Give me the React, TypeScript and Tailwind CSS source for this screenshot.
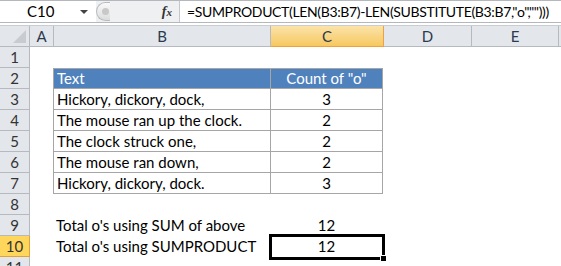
import type { FC, ReactNode } from 'react';

const font = { fontFamily: 'Lato, "Noto Sans", sans-serif' };

const tableRows: [string, number][] = [
  ['Hickory, dickory, dock,', 3],
  ['The mouse ran up the clock.', 2],
  ['The clock struck one,', 2],
  ['The mouse ran down,', 2],
  ['Hickory, dickory, dock.', 3],
];

const RowHead: FC<{ n: number; active?: boolean }> = ({ n, active }) => (
  <div
    className={
      active
        ? 'w-[30px] h-[21px] shrink-0 flex items-center justify-center border-r border-b border-[#e0a23a] bg-[#ffd65c] text-[#333] text-[15px]'
        : 'w-[30px] h-[21px] shrink-0 flex items-center justify-center border-r border-b border-[#b6babf] bg-[#e3e6ea] text-[#333] text-[15px]'
    }
  >
    {n}
  </div>
);

const Row: FC<{ n: number; active?: boolean; children?: ReactNode }> = ({ n, active, children }) => (
  <div className="flex h-[21px]">
    <RowHead n={n} active={active} />
    <div className="w-[24px] shrink-0" />
    {children}
  </div>
);

const App: FC = () => (
  <div className="w-[561px] h-[266px] overflow-hidden bg-white text-black" style={font}>
    {/* formula bar */}
    <div className="flex h-[23px] border-t border-b border-[#b4b8bd] bg-white">
      <div className="w-[96px] shrink-0 relative flex items-center text-[15px]">
        <span className="ml-[27px]">C10</span>
        <span className="absolute left-[80px] top-[9px] w-0 h-0 border-l-[4px] border-r-[4px] border-t-[4px] border-l-transparent border-r-transparent border-t-[#444]" />
      </div>
      <div className="w-[84px] shrink-0 flex items-center bg-[#eef0f2] border-r border-[#c4c8cc]">
        <div className="w-[14px] h-[19px] rounded-l-full border border-r-0 border-[#b8bcc0] bg-gradient-to-b from-[#fafafa] to-[#dcdcdc] flex items-center justify-center">
          <div className="w-[7px] h-[7px] rounded-full bg-[#c8c8c8] ml-[3px]" />
        </div>
        <span className="ml-auto mr-[7px] text-[14px] italic font-bold text-[#333]" style={{ fontFamily: '"Liberation Serif", serif' }}>
          f<span className="text-[11px]">x</span>
        </span>
      </div>
      <div className="flex-1 min-w-0 flex items-center pl-[7px] text-[14px] tracking-[-0.35px] whitespace-nowrap">
        =SUMPRODUCT(LEN(B3:B7)-LEN(SUBSTITUTE(B3:B7,"o","")))
      </div>
    </div>
    <div className="h-[3px] border-b border-[#c9ccd0]" />

    {/* column headers */}
    <div className="flex h-[21px] bg-[#e3e6ea] text-[#2b3a4e] text-[15px]">
      <div className="w-[30px] shrink-0 relative border-r border-b border-[#b6babf]">
        <span className="absolute right-[3px] bottom-[3px] w-0 h-0" style={{ borderBottom: '13px solid #c8ccd0', borderLeft: '13px solid transparent' }} />
      </div>
      <div className="w-[24px] shrink-0 flex items-center justify-center border-r border-b border-[#b6babf]">A</div>
      <div className="w-[217px] shrink-0 flex items-center justify-center border-r border-b border-[#b6babf]">B</div>
      <div className="w-[113px] shrink-0 flex items-center justify-center border-r border-b border-[#f0a040] bg-gradient-to-b from-[#fbe3a8] to-[#f6c85e]">C</div>
      <div className="w-[88px] shrink-0 flex items-center justify-center border-r border-b border-[#b6babf]">D</div>
      <div className="w-[87px] shrink-0 flex items-center justify-center border-r border-b border-[#b6babf]">E</div>
      <div className="flex-1 border-b border-[#b6babf]" />
    </div>

    <div className="text-[15px]">
      <Row n={1} />
      <Row n={2}>
        <div className="w-[217px] shrink-0 flex items-center px-[3px] bg-[#4f81bd] text-white border-l border-t border-b border-[#a6a6a6] -ml-px">
          Text
        </div>
        <div className="w-[113px] shrink-0 flex items-center justify-center bg-[#4f81bd] text-white border-l border-r border-t border-b border-[#a6a6a6]">
          Count of "o"
        </div>
      </Row>
      {tableRows.map(([text, count], i) => (
        <Row key={text} n={i + 3}>
          <div className="w-[217px] shrink-0 flex items-center px-[3px] border-l border-b border-[#a6a6a6] -ml-px">
            {text}
          </div>
          <div className="w-[113px] shrink-0 flex items-center justify-center border-l border-r border-b border-[#a6a6a6]">
            {count}
          </div>
        </Row>
      ))}
      <Row n={8} />
      <Row n={9}>
        <div className="w-[216px] shrink-0 flex items-center px-[3px] -ml-px">Total o's using SUM of above</div>
        <div className="w-[113px] shrink-0 flex items-center justify-center ml-px">12</div>
      </Row>
      <Row n={10} active>
        <div className="w-[216px] shrink-0 flex items-center px-[3px] -ml-px">Total o's using SUMPRODUCT</div>
        <div className="w-[113px] shrink-0 flex items-center justify-center ml-px relative">
          12
          <div className="absolute left-[-1px] right-[-2px] top-[-2px] bottom-[-3px] border-[3px] border-black" />
          <div className="absolute right-[-4px] bottom-[-5px] w-[7px] h-[7px] bg-black border border-white" />
        </div>
      </Row>
      <Row n={11} />
    </div>
  </div>
);

export default App;
